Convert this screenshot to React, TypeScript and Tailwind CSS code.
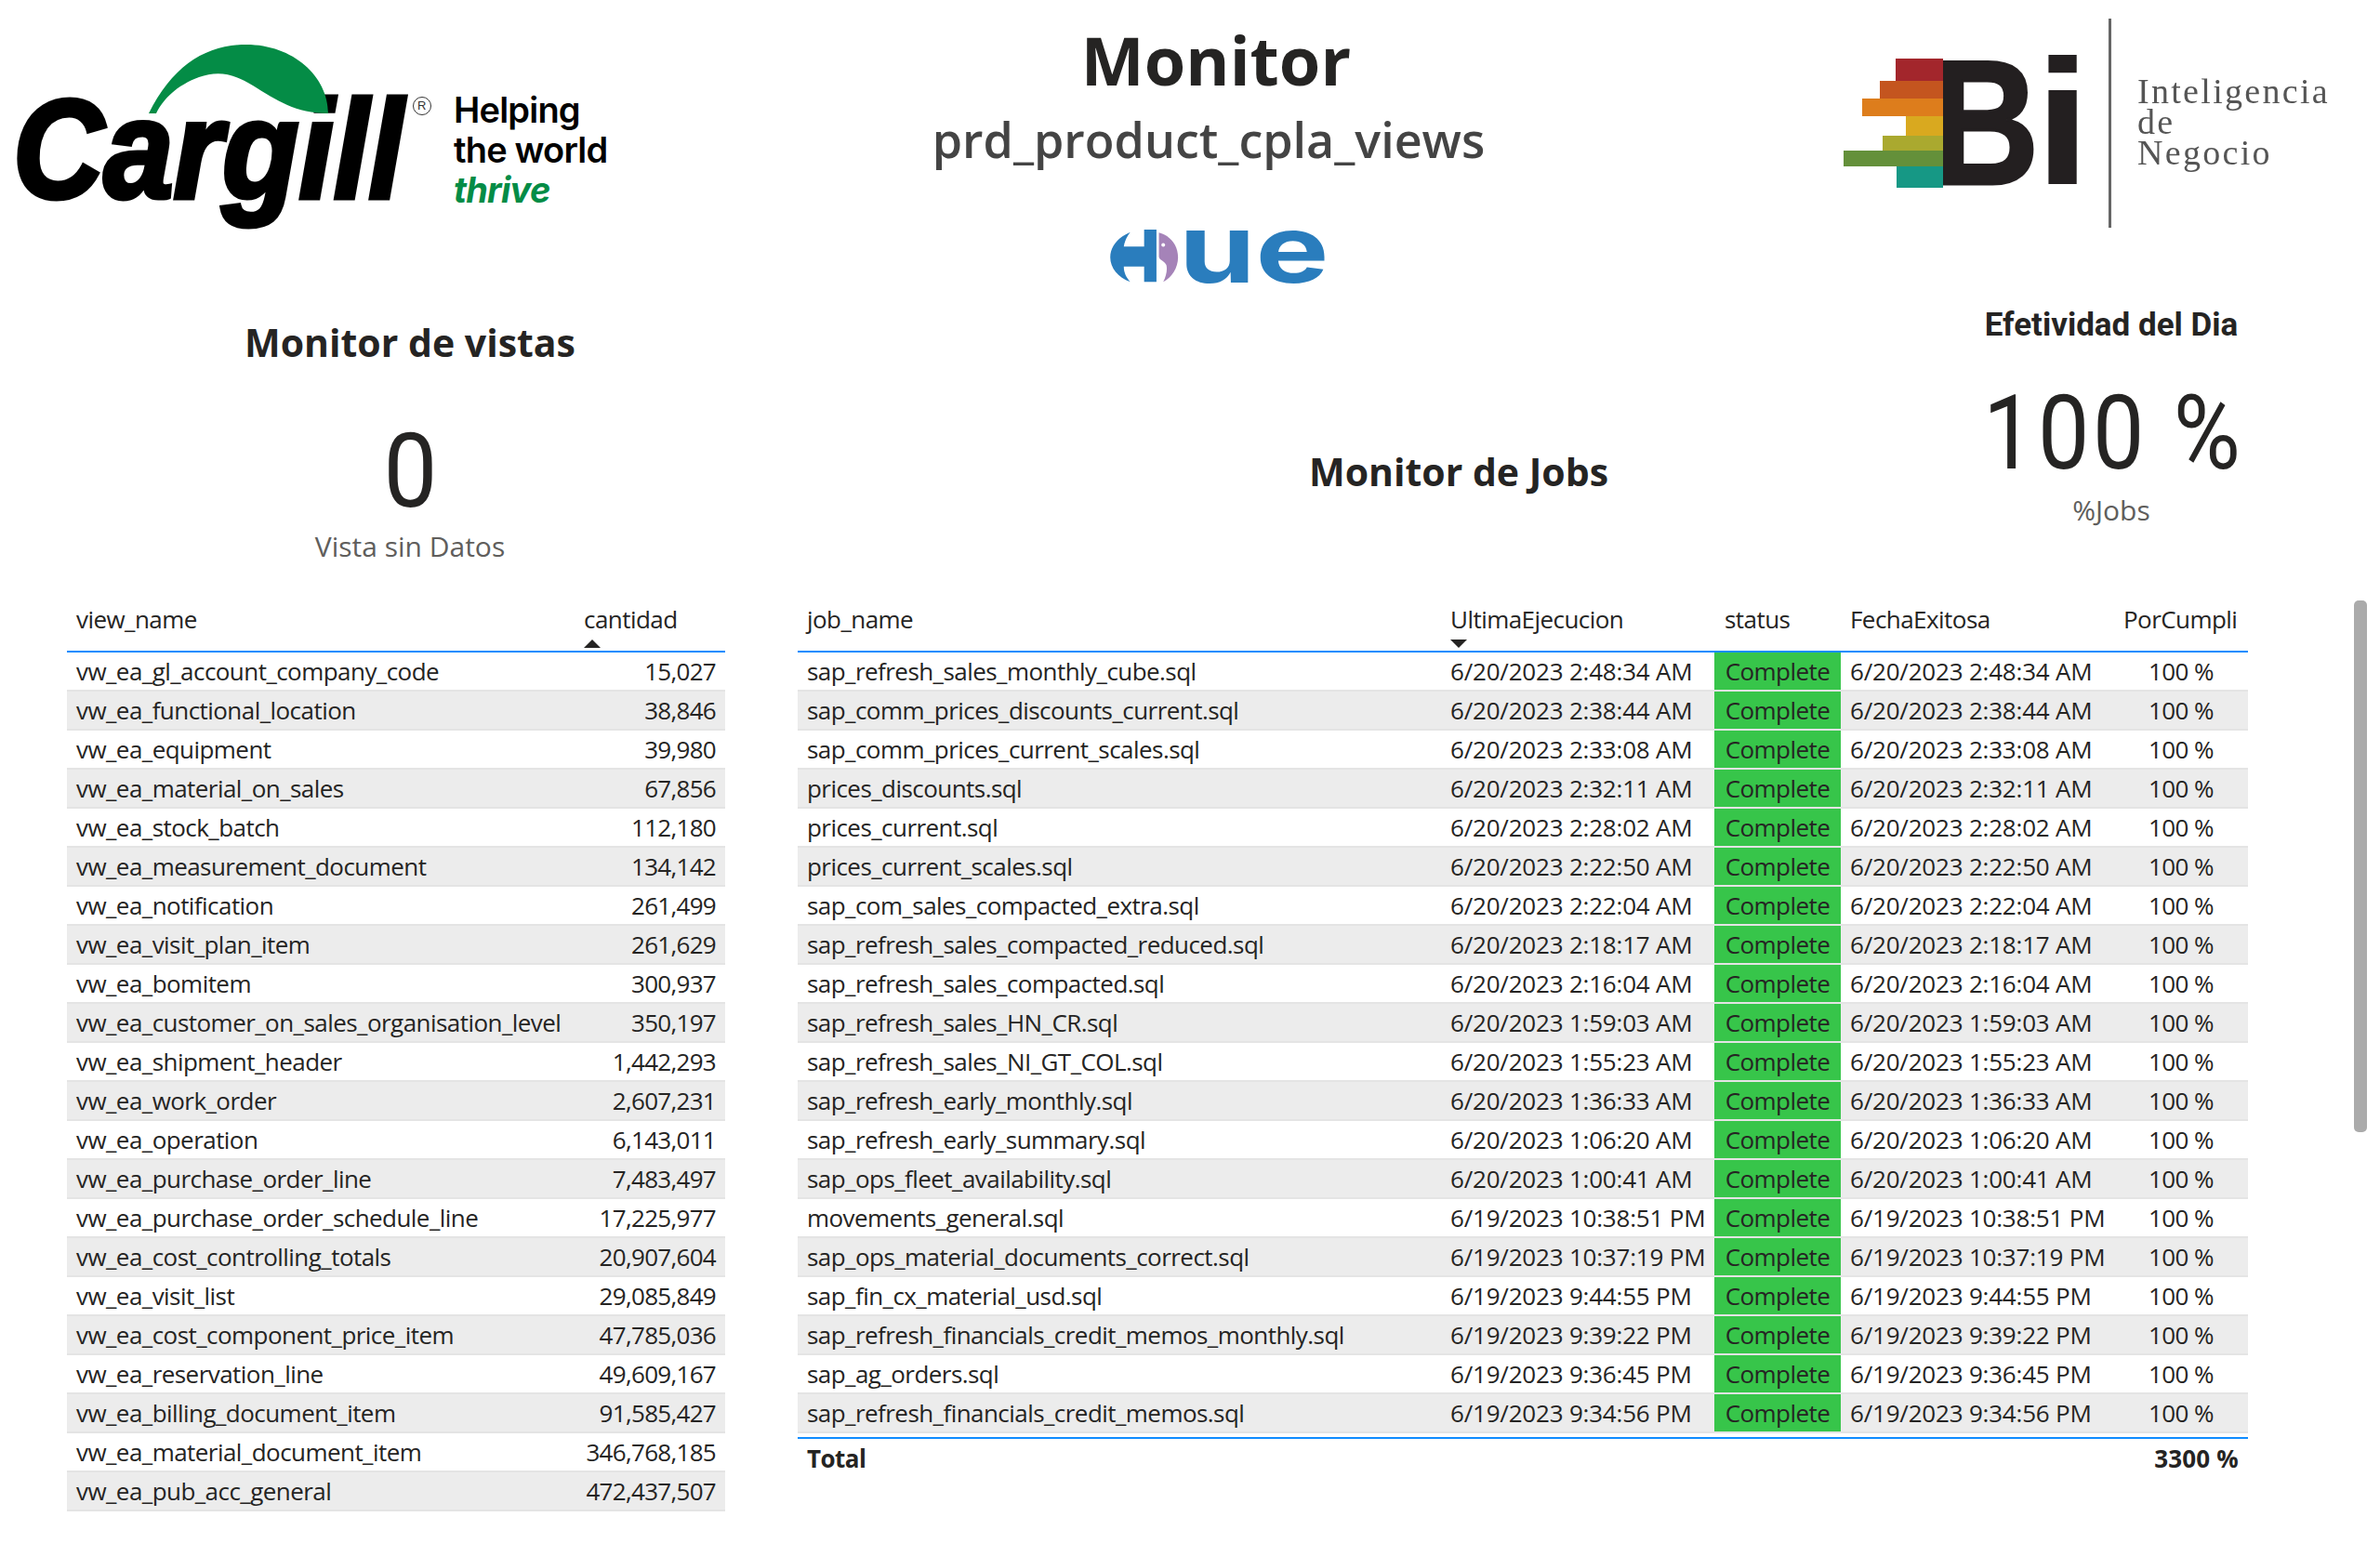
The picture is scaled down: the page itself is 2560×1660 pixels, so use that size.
const views: [string, string][] = [
  ['vw_ea_gl_account_company_code', '15,027'],
  ['vw_ea_functional_location', '38,846'],
  ['vw_ea_equipment', '39,980'],
  ['vw_ea_material_on_sales', '67,856'],
  ['vw_ea_stock_batch', '112,180'],
  ['vw_ea_measurement_document', '134,142'],
  ['vw_ea_notification', '261,499'],
  ['vw_ea_visit_plan_item', '261,629'],
  ['vw_ea_bomitem', '300,937'],
  ['vw_ea_customer_on_sales_organisation_level', '350,197'],
  ['vw_ea_shipment_header', '1,442,293'],
  ['vw_ea_work_order', '2,607,231'],
  ['vw_ea_operation', '6,143,011'],
  ['vw_ea_purchase_order_line', '7,483,497'],
  ['vw_ea_purchase_order_schedule_line', '17,225,977'],
  ['vw_ea_cost_controlling_totals', '20,907,604'],
  ['vw_ea_visit_list', '29,085,849'],
  ['vw_ea_cost_component_price_item', '47,785,036'],
  ['vw_ea_reservation_line', '49,609,167'],
  ['vw_ea_billing_document_item', '91,585,427'],
  ['vw_ea_material_document_item', '346,768,185'],
  ['vw_ea_pub_acc_general', '472,437,507'],
];

const jobs: [string, string][] = [
  ['sap_refresh_sales_monthly_cube.sql', '6/20/2023 2:48:34 AM'],
  ['sap_comm_prices_discounts_current.sql', '6/20/2023 2:38:44 AM'],
  ['sap_comm_prices_current_scales.sql', '6/20/2023 2:33:08 AM'],
  ['prices_discounts.sql', '6/20/2023 2:32:11 AM'],
  ['prices_current.sql', '6/20/2023 2:28:02 AM'],
  ['prices_current_scales.sql', '6/20/2023 2:22:50 AM'],
  ['sap_com_sales_compacted_extra.sql', '6/20/2023 2:22:04 AM'],
  ['sap_refresh_sales_compacted_reduced.sql', '6/20/2023 2:18:17 AM'],
  ['sap_refresh_sales_compacted.sql', '6/20/2023 2:16:04 AM'],
  ['sap_refresh_sales_HN_CR.sql', '6/20/2023 1:59:03 AM'],
  ['sap_refresh_sales_NI_GT_COL.sql', '6/20/2023 1:55:23 AM'],
  ['sap_refresh_early_monthly.sql', '6/20/2023 1:36:33 AM'],
  ['sap_refresh_early_summary.sql', '6/20/2023 1:06:20 AM'],
  ['sap_ops_fleet_availability.sql', '6/20/2023 1:00:41 AM'],
  ['movements_general.sql', '6/19/2023 10:38:51 PM'],
  ['sap_ops_material_documents_correct.sql', '6/19/2023 10:37:19 PM'],
  ['sap_fin_cx_material_usd.sql', '6/19/2023 9:44:55 PM'],
  ['sap_refresh_financials_credit_memos_monthly.sql', '6/19/2023 9:39:22 PM'],
  ['sap_ag_orders.sql', '6/19/2023 9:36:45 PM'],
  ['sap_refresh_financials_credit_memos.sql', '6/19/2023 9:34:56 PM'],
];

const segoe = "font-['Open_Sans',sans-serif]";

function CargillLogo() {
  return (
    <div className="relative w-[680px] h-[270px] shrink-0">
      <span className="absolute left-[14px] top-[76px] origin-left scale-x-[0.9] text-[150px] leading-[170px] font-bold italic text-black [-webkit-text-stroke:5px_black] font-['Liberation_Sans',sans-serif]">
        Cargill
      </span>
      <svg className="absolute left-0 top-0" width="480" height="140" viewBox="0 0 480 140">
        <path d="M160 122C186 70 222 48 265 48C315 48 353 82 353 122C318 122 298 108 272 92C248 77 232 77 214 83C190 92 176 106 168 122Z" fill="#048c46" />
        <circle cx="454" cy="114" r="9.5" fill="none" stroke="#333" strokeWidth="1" />
      </svg>
      <span className="absolute left-[449px] top-[106px] text-[13px] leading-4 text-[#333] font-['Liberation_Sans',sans-serif]">R</span>
      <div className="absolute left-[488px] top-[97px] flex flex-col text-[38px] leading-[43px] font-semibold tracking-[-0.8px] text-black font-['Inter',sans-serif]">
        <span>Helping</span>
        <span>the world</span>
        <span className="italic font-bold text-[#048c46]">thrive</span>
      </div>
    </div>
  );
}

function HueLogo() {
  return (
    <div className="relative w-[228px] h-[57px] mt-[63px]">
      <svg className="absolute left-0 top-0" width="74" height="57" viewBox="40 50 222 172">
        <path d="M105 58C65 75 40 105 40 140C40 175 65 205 105 220C92 205 84 190 84 170L150 170L150 220L190 220L190 50L150 50L150 105L84 105C86 90 94 72 105 58Z" fill="#2a7dbd" />
        <path d="M198 60C235 70 260 100 260 140C260 175 240 205 212 220C222 200 226 180 222 165C215 150 200 150 198 138Z" fill="#a583b8" />
        <circle cx="212" cy="100" r="6" fill="#fff" />
      </svg>
      <span className="absolute left-[74px] top-[-31px] origin-left scale-x-[1.3] text-[102px] leading-[102px] font-bold text-[#2a7dbd] font-['Inter',sans-serif]">
        ue
      </span>
    </div>
  );
}

function BiLogo() {
  const bars = [
    { x: 56, y: 63, w: 51, h: 24, c: '#a3262c' },
    { x: 39, y: 87, w: 68, h: 19, c: '#c4551f' },
    { x: 20, y: 106, w: 87, h: 19, c: '#dd7d1c' },
    { x: 67, y: 125, w: 40, h: 21, c: '#d9a91f' },
    { x: 42, y: 146, w: 65, h: 16, c: '#aaa92f' },
    { x: 0, y: 162, w: 107, h: 17, c: '#64903a' },
    { x: 57, y: 179, w: 50, h: 23, c: '#169885' },
  ];
  return (
    <div className="relative w-[577px] h-[260px] shrink-0 blur-[0.7px]">
      <span className="absolute left-[94px] top-[27px] origin-left scale-x-[0.84] text-[192px] leading-[210px] font-bold text-[#231f20] [-webkit-text-stroke:3px_#231f20] font-['Liberation_Sans',sans-serif]">
        B
      </span>
      <span className="absolute left-[205px] top-[27px] origin-left scale-x-[1.15] text-[192px] leading-[210px] font-bold text-[#231f20] font-['Liberation_Sans',sans-serif]">
        i
      </span>
      <svg className="absolute left-0 top-0" width="110" height="210" viewBox="0 0 110 210">
        {bars.map((b) => (
          <rect key={b.y} x={b.x} y={b.y} width={b.w} height={b.h} fill={b.c} />
        ))}
      </svg>
      <div className="absolute left-[285px] top-[20px] w-[3px] h-[225px] bg-[#666]" />
      <div className="absolute left-[316px] top-[82px] flex flex-col text-[38px] leading-[33px] tracking-[2.3px] text-[#555] font-['Liberation_Serif',serif]">
        <span>Inteligencia</span>
        <span>de</span>
        <span>Negocio</span>
      </div>
    </div>
  );
}

function SortArrow({ up }: { up?: boolean }) {
  return (
    <svg className="mt-[4px]" width="18" height="9" viewBox="0 0 18 9">
      <path d={up ? 'M0 9L9 0L18 9Z' : 'M0 0L18 0L9 9Z'} fill="#252423" />
    </svg>
  );
}

function ViewsTable() {
  return (
    <div className={`w-[708px] shrink-0 text-[26px] leading-[36px] tracking-[-0.55px] text-[#252423] ${segoe}`}>
      <div className="grid grid-cols-[546px_162px] h-[62px] border-b-2 border-[#118dff]">
        <div className="pl-[10px] pt-[8px]">view_name</div>
        <div className="pl-[10px] pt-[8px] flex flex-col">
          <span>cantidad</span>
          <SortArrow up />
        </div>
      </div>
      {views.map(([name, qty], i) => (
        <div
          key={name}
          className={`grid grid-cols-[546px_162px] h-[42px] items-center border-b-2 border-[#e4e4e4] ${i % 2 ? 'bg-[#ececec]' : 'bg-white'}`}
        >
          <div className="pl-[10px] whitespace-nowrap">{name}</div>
          <div className="pr-[10px] text-right tracking-[-0.7px]">{qty}</div>
        </div>
      ))}
    </div>
  );
}

function JobsTable() {
  const cols = 'grid grid-cols-[692px_294px_136px_294px_144px]';
  return (
    <div className={`w-[1560px] shrink-0 text-[26px] leading-[36px] tracking-[-0.55px] text-[#252423] ${segoe}`}>
      <div className={`${cols} h-[62px] border-b-2 border-[#118dff]`}>
        <div className="pl-[10px] pt-[8px]">job_name</div>
        <div className="pl-[10px] pt-[8px] flex flex-col">
          <span>UltimaEjecucion</span>
          <SortArrow />
        </div>
        <div className="pl-[11px] pt-[8px]">status</div>
        <div className="pl-[10px] pt-[8px]">FechaExitosa</div>
        <div className="pl-[10px] pt-[8px]">PorCumpli</div>
      </div>
      {jobs.map(([name, last], i) => (
        <div
          key={name}
          className={`${cols} h-[42px] items-stretch border-b-2 border-[#e4e4e4] ${i % 2 ? 'bg-[#ececec]' : 'bg-white'}`}
        >
          <div className="pl-[10px] flex items-center whitespace-nowrap">{name}</div>
          <div className="pl-[10px] flex items-center whitespace-nowrap tracking-[-0.2px]">{last}</div>
          <div className="flex items-center justify-center bg-[#37c54a]">Complete</div>
          <div className="pl-[10px] flex items-center whitespace-nowrap tracking-[-0.2px]">{last}</div>
          <div className="flex items-center justify-center">100 %</div>
        </div>
      ))}
      <div className={`${cols} mt-[4px] h-[44px] items-center border-t-2 border-[#118dff] font-bold`}>
        <div className="pl-[10px]">Total</div>
        <div />
        <div />
        <div />
        <div className="pr-[10px] text-right tracking-[0.2px]">3300 %</div>
      </div>
    </div>
  );
}

export default function App() {
  return (
    <div className="relative w-[2560px] h-[1660px] overflow-hidden bg-white">
      <div className="grid grid-cols-[680px_1256px_624px] h-[330px]">
        <CargillLogo />
        <div className="flex flex-col items-center">
          <h1 className={`mt-[18px] text-[72px] leading-[92px] font-bold text-[#252423] ${segoe}`}>Monitor</h1>
          <h2 className={`mt-[6px] mr-[16px] text-[52px] leading-[68px] font-semibold text-[#444] ${segoe}`}>prd_product_cpla_views</h2>
          <HueLogo />
        </div>
        <div className="pl-[47px]">
          <BiLogo />
        </div>
      </div>
      <div className="grid grid-cols-[858px_1262px_302px] h-[320px] -mt-[10px]">
        <div className="w-[738px] ml-[72px] flex flex-col items-center">
          <h3 className={`mt-[19px] text-[41px] leading-[58px] font-bold text-[#252423] ${segoe}`}>Monitor de vistas</h3>
          <div className="mt-[50px] origin-center scale-x-[0.92] text-[112px] leading-[120px] text-[#252423] font-['Roboto',sans-serif]">0</div>
          <div className={`text-[30px] leading-[42px] text-[#605e5c] ${segoe}`}>Vista sin Datos</div>
        </div>
        <div className="flex justify-center pt-[158px] pl-[160px]">
          <h3 className={`text-[41px] leading-[58px] font-bold text-[#252423] ${segoe}`}>Monitor de Jobs</h3>
        </div>
        <div className="flex flex-col items-center">
          <h3 className="mt-[6px] text-[35px] leading-[48px] font-bold whitespace-nowrap text-[#252423] font-['Roboto',sans-serif]">Efetividad del Dia</h3>
          <div className="mt-[32px] ml-[4px] origin-center scale-x-[0.88] text-[112px] leading-[120px] tracking-[4px] whitespace-nowrap text-[#252423] font-['Roboto',sans-serif]">100 %</div>
          <div className={`mt-[2px] text-[30px] leading-[42px] text-[#605e5c] ${segoe}`}>%Jobs</div>
        </div>
      </div>
      <div className="flex pl-[72px] gap-[78px]">
        <ViewsTable />
        <JobsTable />
      </div>
      <div className="absolute left-[2532px] top-[646px] w-[14px] h-[572px] rounded-[5px] bg-[#ababab]" />
    </div>
  );
}
